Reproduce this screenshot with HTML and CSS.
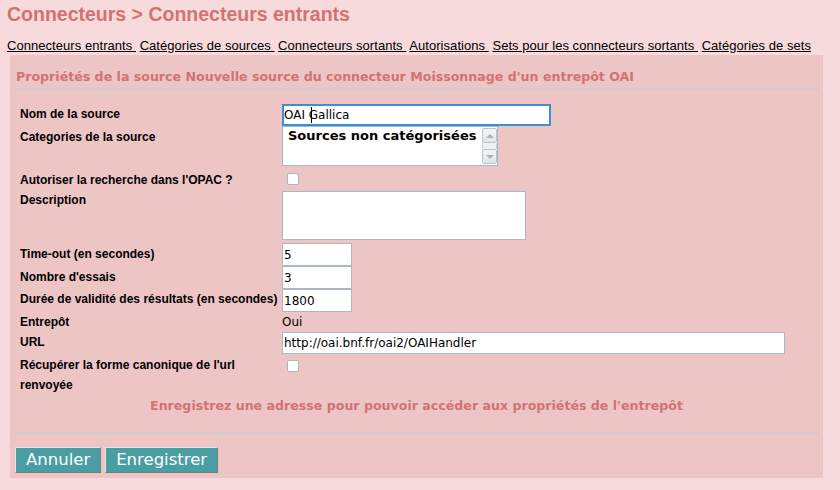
FILE: index.html
```html
<!DOCTYPE html>
<html lang="fr">
<head>
<meta charset="utf-8">
<title>Connecteurs entrants</title>
<link rel="stylesheet" href="styles.css">
</head>
<body>
<h1 class="page-title">Connecteurs &gt; Connecteurs entrants</h1>
<nav class="tabs"><a href="#">Connecteurs entrants&nbsp;</a> <a href="#">Catégories de sources&nbsp;</a> <a href="#">Connecteurs sortants&nbsp;</a> <a href="#">Autorisations&nbsp;</a> <a href="#">Sets pour les connecteurs sortants&nbsp;</a> <a href="#">Catégories de sets</a></nav>
<form class="panel">
  <h2 class="panel-title">Propriétés de la source Nouvelle source du connecteur Moissonnage d'un entrepôt OAI</h2>
  <div class="fields">
    <div class="row">
      <label class="lab">Nom de la source</label>
      <span class="input-wrap"><input class="text text-name is-focused" type="text" value="OAI Gallica"><span class="caret" aria-hidden="true"></span></span>
    </div>
    <div class="row">
      <label class="lab lab-list">Categories de la source</label>
      <div class="listbox">
        <span class="listbox-item">Sources non catégorisées</span>
        <span class="scrollbar"><span class="sb-btn sb-up"></span><span class="sb-track"></span><span class="sb-btn sb-down"></span></span>
      </div>
    </div>
    <div class="row row-check">
      <label class="lab lab-check">Autoriser la recherche dans l'OPAC ?</label>
      <span class="check-cell"><input class="check" type="checkbox"></span>
    </div>
    <div class="row">
      <label class="lab lab-area">Description</label>
      <textarea class="area"></textarea>
    </div>
    <div class="row">
      <label class="lab lab-lowered">Time-out (en secondes)</label>
      <input class="text text-short" type="text" value="5">
    </div>
    <div class="row">
      <label class="lab lab-lowered">Nombre d'essais</label>
      <input class="text text-short" type="text" value="3">
    </div>
    <div class="row">
      <label class="lab">Durée de validité des résultats (en secondes)</label>
      <input class="text text-short" type="text" value="1800">
    </div>
    <div class="row">
      <label class="lab">Entrepôt</label>
      <span class="value">Oui</span>
    </div>
    <div class="row">
      <label class="lab">URL</label>
      <input class="text text-url" type="text" value="http://oai.bnf.fr/oai2/OAIHandler">
    </div>
    <div class="row">
      <label class="lab">Récupérer la forme canonique de l'url<br>renvoyée</label>
      <span class="check-cell check-cell-late"><input class="check" type="checkbox"></span>
    </div>
  </div>
  <p class="msg">Enregistrez une adresse pour pouvoir accéder aux propriétés de l'entrepôt</p>
  <hr class="sep">
  <div class="actions">
    <button type="button" class="btn">Annuler</button>
    <button type="button" class="btn">Enregistrer</button>
  </div>
</form>
</body>
</html>
```
FILE: styles.css
```css
* { box-sizing: border-box; }
html, body { margin: 0; }
body {
  background: #f7dbdc;
  padding: 3px 17px 0 7px;
  font-family: "Liberation Sans", Arial, sans-serif;
  color: #000;
}
.page-title {
  margin: 0;
  font-size: 19.5px;
  line-height: 22px;
  font-weight: bold;
  color: #d27272;
}
.tabs {
  margin-top: 13px;
  font-size: 13px;
  line-height: 16px;
  letter-spacing: 0.05px;
  white-space: nowrap;
}
.tabs a { color: #000; text-decoration: underline; }

.panel {
  margin: 1px 0 0 3px;
  background: #eec5c5;
  padding: 12px 5px 5px;
}
.panel-title {
  margin: 0;
  padding: 0 1px 1px;
  font-family: "DejaVu Sans", sans-serif;
  font-size: 12.6px;
  line-height: 20px;
  font-weight: bold;
  color: #d27272;
  border-bottom: 2px solid #cccccc;
}
.fields { margin-top: 14px; padding-left: 5px; }
.row {
  display: grid;
  grid-template-columns: 262px 1fr;
  align-items: start;
}
.lab {
  font-size: 12px;
  line-height: 20px;
  font-weight: bold;
}
.lab-list { margin-top: 1px; }
.lab-check { margin-top: 4px; }
.lab-area { margin-top: -1px; }
.lab-lowered { margin-top: 1px; }

.text {
  display: block;
  margin: 0;
  height: 23px;
  padding: 0 1px;
  border: 1px solid #a9b8c3;
  border-radius: 0;
  background: #fff;
  font-family: "DejaVu Sans", sans-serif;
  font-size: 12px;
  color: #000;
  outline: none;
}
.text-name { width: 269px; height: 22px; }
.text-short { width: 70px; }
.text-url { width: 503px; height: 22px; margin-bottom: 1px; }
.is-focused { border-color: #3a8fd6; box-shadow: inset 0 0 0 1px #3a8fd6; }
.input-wrap { position: relative; display: block; width: 269px; }
.caret {
  position: absolute;
  left: 29px;
  top: 3px;
  width: 1px;
  height: 16px;
  background: #000;
}

.listbox {
  display: flex;
  width: 216px;
  height: 40px;
  border: 1px solid #a9b8c3;
  background: #fff;
}
.listbox-item {
  flex: 1;
  padding: 1px 5px;
  font-family: "DejaVu Sans", sans-serif;
  font-size: 13px;
  font-weight: bold;
  line-height: 15px;
  white-space: nowrap;
}
.scrollbar {
  display: flex;
  flex-direction: column;
  width: 15px;
  margin: 1px 0;
}
.sb-btn {
  height: 15px;
  border: 1px solid #b9c5cc;
  border-radius: 2px;
  background: linear-gradient(#f3f6f7, #dfe6e9);
  display: flex;
  align-items: center;
  justify-content: center;
}
.sb-btn::before {
  content: "";
  width: 0;
  height: 0;
  border-left: 4px solid transparent;
  border-right: 4px solid transparent;
}
.sb-up::before { border-bottom: 4px solid #a9b5bd; }
.sb-down::before { border-top: 4px solid #a9b5bd; }
.sb-track {
  flex: 1;
  background: #eef2f3;
  border-left: 1px solid #c7d0d5;
  border-right: 1px solid #c7d0d5;
}

.check-cell { display: block; padding: 7px 0 6px 5px; height: 25px; }
.check-cell-late { padding: 5px 0 0 5px; height: auto; }
.check {
  appearance: none;
  -webkit-appearance: none;
  display: block;
  margin: 0;
  width: 12px;
  height: 12px;
  border: 1px solid #a7b6c1;
  border-radius: 2px;
  background: #fff;
}
.area {
  display: block;
  margin: 0 0 3px;
  width: 244px;
  height: 49px;
  border: 1px solid #a9b8c3;
  background: #fff;
  resize: none;
  padding: 1px;
}
.value {
  font-family: "DejaVu Sans", sans-serif;
  font-size: 12px;
  line-height: 20px;
}
.msg {
  margin: 1px 0 0;
  text-align: center;
  font-family: "DejaVu Sans", sans-serif;
  font-size: 12.6px;
  line-height: 20px;
  font-weight: bold;
  color: #d27272;
}
.sep {
  margin: 16px 0 0;
  border: 0;
  border-top: 2px solid #cccccc;
  height: 0;
}
.actions { margin-top: 13px; display: flex; gap: 4px; }
.btn {
  height: 26px;
  margin: 0;
  padding: 0 10px;
  border: 1px solid;
  border-color: #dbe8e8 #7a7a7a #7a7a7a #dbe8e8;
  border-radius: 0;
  background: #4a9ea3;
  color: #fff;
  font-family: "DejaVu Sans", sans-serif;
  font-size: 16.5px;
  line-height: 24px;
}
```
